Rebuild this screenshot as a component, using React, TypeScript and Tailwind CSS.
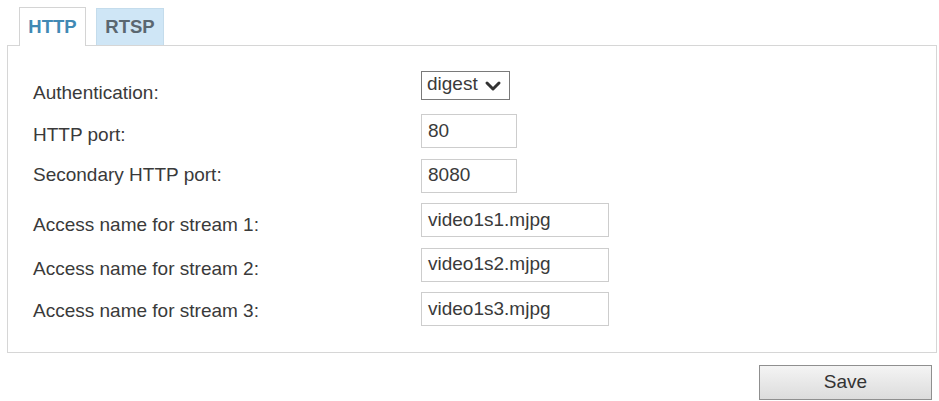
import { ChevronDown } from "lucide-react";

const rows = [
  { label: "HTTP port:", value: "80", width: "w-[96px]", shift: "mt-[8px]" },
  { label: "Secondary HTTP port:", value: "8080", width: "w-[96px]", shift: "mt-0" },
  { label: "Access name for stream 1:", value: "video1s1.mjpg", width: "w-[188px]", shift: "mt-[10px]" },
  { label: "Access name for stream 2:", value: "video1s2.mjpg", width: "w-[188px]", shift: "mt-[9px]" },
  { label: "Access name for stream 3:", value: "video1s3.mjpg", width: "w-[188px]", shift: "mt-[4px]" },
];

export default function App() {
  return (
    <div
      className="w-[939px] h-[401px] bg-white text-[#3a3a3a] overflow-hidden"
      style={{ fontFamily: '"Liberation Sans", Arial, sans-serif' }}
    >
      {/* tabs */}
      <div className="flex gap-[10px] pl-[19px] pt-[7px]">
        <div className="relative z-10 -mb-px flex h-[39px] w-[67px] items-center justify-center border border-b-0 border-[#d4d4d4] bg-white text-[18.5px] font-bold text-[#4189b4]">
          HTTP
        </div>
        <div className="mt-px flex h-[37px] w-[68px] items-center justify-center border border-b-0 border-[#c4dcec] bg-[#cfe6f6] text-[18.5px] font-bold text-[#5b6770]">
          RTSP
        </div>
      </div>

      {/* panel */}
      <div className="ml-[7px] h-[308px] w-[930px] border border-[#d6d6d6] pl-[25px] pt-[21px]">
        <div className="flex h-[37px] items-center">
          <div className="mt-[16px] w-[388px] text-[19px]">Authentication:</div>
          <div className="flex h-[29px] w-[89px] items-center justify-between border border-[#7a7a7a] pl-[5px] pr-[4px] text-[19px]">
            <span className="-mt-[2px]">digest</span>
            <ChevronDown size={24} strokeWidth={3} className="text-[#333]" />
          </div>
        </div>
        <div className="mt-[10px] flex flex-col gap-[10.5px]">
          {rows.map((r) => (
            <div key={r.label} className="flex h-[34px] items-center">
              <div className={`${r.shift} w-[388px] text-[19px]`}>{r.label}</div>
              <div
                className={`${r.width} flex h-[34px] items-center border border-[#cdcdcd] px-[6px] text-[19px]`}
              >
                {r.value}
              </div>
            </div>
          ))}
        </div>
      </div>

      {/* footer */}
      <div className="flex justify-end pr-[7px] pt-[12px]">
        <button className="h-[35px] w-[173px] border border-[#8f8f8f] bg-gradient-to-b from-[#f4f4f4] to-[#dcdcdc] text-[19px] text-[#333]">
          Save
        </button>
      </div>
    </div>
  );
}
